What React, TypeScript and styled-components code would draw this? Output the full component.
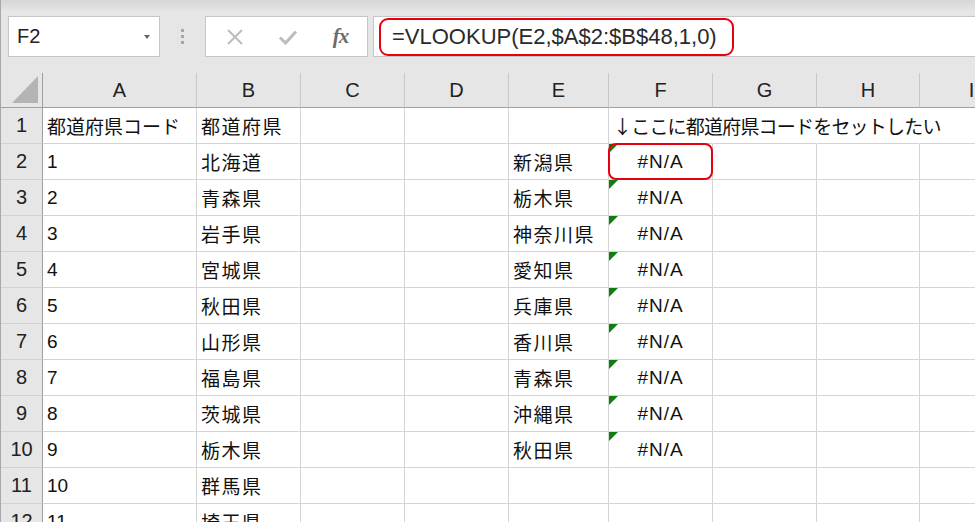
import React from 'react';
import styled, { createGlobalStyle } from 'styled-components';

const GlobalStyle = createGlobalStyle`
  html, body {
    margin: 0;
    padding: 0;
    background: #ffffff;
  }
  body {
    font-family: "Liberation Sans", "Noto Sans CJK JP", sans-serif;
    color: #1f1f1f;
  }
`;

const Window = styled.div`
  width: 975px;
  height: 522px;
  overflow: hidden;
  box-sizing: border-box;
  border-left: 1px solid #a8a8a8;
  background: #ffffff;
`;

const Toolbar = styled.div`
  display: flex;
  align-items: flex-start;
  height: 73px;
  box-sizing: border-box;
  padding: 16px 0 0 7px;
  background: linear-gradient(#d6d6d6 0, #e6e6e6 12px);
`;

const NameBox = styled.div`
  display: flex;
  align-items: center;
  justify-content: space-between;
  width: 152px;
  height: 41px;
  box-sizing: border-box;
  padding: 0 9px 0 8px;
  border: 1px solid #c6c6c6;
  background: #ffffff;
  font-size: 20px;
  color: #222;
`;

const DropArrow = styled.span`
  width: 0;
  height: 0;
  border-left: 3.5px solid transparent;
  border-right: 3.5px solid transparent;
  border-top: 4px solid #666;
`;

const Grip = styled.div`
  display: flex;
  flex-direction: column;
  align-items: center;
  gap: 3px;
  width: 45px;
  padding-top: 13px;

  span {
    width: 3px;
    height: 3px;
    background: #a6a6a6;
  }
`;

const ButtonBox = styled.div`
  display: flex;
  width: 163px;
  height: 41px;
  box-sizing: border-box;
  padding-left: 2px;
  border: 1px solid #c6c6c6;
  background: #ffffff;
`;

const ToolButton = styled.div`
  display: flex;
  align-items: center;
  justify-content: center;
  width: 53px;
  height: 100%;
`;

const FxLabel = styled.span`
  font-family: "Liberation Serif", "DejaVu Serif", serif;
  font-style: italic;
  font-weight: bold;
  font-size: 21px;
  color: #6b6b6b;
  letter-spacing: -1px;
`;

const FormulaInput = styled.div`
  flex: 1;
  display: flex;
  align-items: center;
  height: 41px;
  box-sizing: border-box;
  margin-left: 5px;
  padding-left: 5px;
  border: 1px solid #c6c6c6;
  border-right: none;
  background: #ffffff;
`;

const FormulaText = styled.span`
  display: inline-flex;
  align-items: center;
  height: 38px;
  box-sizing: border-box;
  padding: 0 15px 0 11px;
  border: 2px solid #e8000f;
  border-radius: 9px;
  font-size: 22px;
  color: #2a2a2a;
  white-space: nowrap;
`;

const Sheet = styled.div`
  display: grid;
  grid-template-columns: 42px 154px 104px 104px 104px 100px 104px 104px 103px 104px;
  grid-template-rows: 35px repeat(12, 36px);
  width: max-content;
  background: #ffffff;
`;

const Corner = styled.div`
  display: flex;
  align-items: flex-end;
  justify-content: flex-end;
  padding: 0 4px 4px 0;
  box-sizing: border-box;
  background: #e6e6e6;
  border-right: 1px solid #9f9f9f;
  border-bottom: 1px solid #9f9f9f;
`;

const ColHeader = styled.div`
  display: flex;
  align-items: center;
  justify-content: center;
  box-sizing: border-box;
  background: #e6e6e6;
  border-right: 1px solid #c8c8c8;
  border-bottom: 1px solid #9f9f9f;
  font-size: 20px;
  color: #222;
`;

const RowHeader = styled.div`
  display: flex;
  align-items: center;
  justify-content: center;
  box-sizing: border-box;
  background: #e6e6e6;
  border-right: 1px solid #9f9f9f;
  border-bottom: 1px solid #d2d2d2;
  font-size: 20px;
  color: #222;
`;

const Cell = styled.div<{
  $center?: boolean;
  $open?: boolean;
  $flag?: boolean;
  $circled?: boolean;
  $spaced?: boolean;
}>`
  position: ${(p) => (p.$flag || p.$circled ? 'relative' : 'static')};
  display: flex;
  align-items: center;
  justify-content: ${(p) => (p.$center ? 'center' : 'flex-start')};
  box-sizing: border-box;
  padding: 0 4px;
  border-right: 1px solid ${(p) => (p.$open ? 'transparent' : '#d4d4d4')};
  border-bottom: 1px solid #d4d4d4;
  font-size: 19px;
  color: #111;
  white-space: nowrap;
  overflow: visible;
  letter-spacing: ${(p) => (p.$center ? '1px' : p.$spaced ? '1.5px' : '0')};

  &::before {
    content: '';
    display: ${(p) => (p.$flag ? 'block' : 'none')};
    position: absolute;
    top: 0;
    left: 0;
    width: 0;
    height: 0;
    border-top: 9px solid #0f7d0f;
    border-right: 9px solid transparent;
  }

  &::after {
    content: '';
    display: ${(p) => (p.$circled ? 'block' : 'none')};
    position: absolute;
    top: -1px;
    left: -1px;
    right: -1px;
    bottom: -1px;
    border: 2px solid #e8000f;
    border-radius: 8px;
  }
`;

const Note = styled.span`
  font-family: "Noto Sans CJK JP", sans-serif;
  font-size: 19px;
  letter-spacing: -0.8px;
`;

const columns = ['A', 'B', 'C', 'D', 'E', 'F', 'G', 'H', 'I'];

const prefectures = ['都道府県', '北海道', '青森県', '岩手県', '宮城県', '秋田県', '山形県', '福島県', '茨城県', '栃木県', '群馬県', '埼玉県'];
const lookups = ['', '新潟県', '栃木県', '神奈川県', '愛知県', '兵庫県', '香川県', '青森県', '沖縄県', '秋田県', '', ''];

const App: React.FC = () => {
  return (
    <Window>
      <GlobalStyle />
      <Toolbar>
        <NameBox>
          F2
          <DropArrow />
        </NameBox>
        <Grip>
          <span />
          <span />
          <span />
        </Grip>
        <ButtonBox>
          <ToolButton>
            <svg width="18" height="18" viewBox="0 0 18 18">
              <path d="M2 2 L16 16 M16 2 L2 16" stroke="#bdbdbd" strokeWidth="2" fill="none" />
            </svg>
          </ToolButton>
          <ToolButton>
            <svg width="20" height="18" viewBox="0 0 20 18">
              <path d="M2 9.5 L7.5 15 L18 3.5" stroke="#bdbdbd" strokeWidth="3" fill="none" />
            </svg>
          </ToolButton>
          <ToolButton>
            <FxLabel>fx</FxLabel>
          </ToolButton>
        </ButtonBox>
        <FormulaInput>
          <FormulaText>=VLOOKUP(E2,$A$2:$B$48,1,0)</FormulaText>
        </FormulaInput>
      </Toolbar>

      <Sheet>
        <Corner>
          <svg width="26" height="27" viewBox="0 0 26 27">
            <polygon points="0,27 26,27 26,0" fill="#b4b4b4" />
          </svg>
        </Corner>
        {columns.map((c) => (
          <ColHeader key={c}>{c}</ColHeader>
        ))}

        {prefectures.map((pref, i) => {
          const row = i + 1;
          const isData = row >= 2 && row <= 10;
          return (
            <React.Fragment key={row}>
              <RowHeader>{row}</RowHeader>
              <Cell>{row === 1 ? '都道府県コード' : row - 1}</Cell>
              <Cell $spaced>{pref}</Cell>
              <Cell />
              <Cell />
              <Cell $spaced>{lookups[i]}</Cell>
              {row === 1 ? (
                <Cell $open>
                  <Note>↓ここに都道府県コードをセットしたい</Note>
                </Cell>
              ) : (
                <Cell $center={isData} $flag={isData} $circled={row === 2}>
                  {isData ? '#N/A' : ''}
                </Cell>
              )}
              <Cell $open={row === 1} />
              <Cell $open={row === 1} />
              <Cell />
            </React.Fragment>
          );
        })}
      </Sheet>
    </Window>
  );
};

export default App;
